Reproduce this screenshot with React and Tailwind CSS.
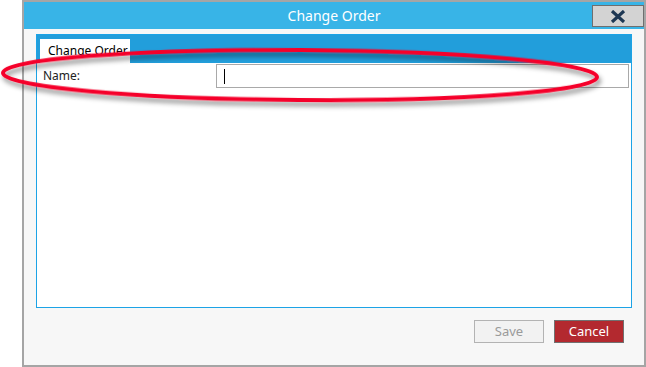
export default function App() {
  return (
    <div className="relative w-[646px] h-[367px] bg-white overflow-hidden" style={{ fontFamily: '"Segoe UI", "Noto Sans", "Liberation Sans", sans-serif' }}>
      <div className="ml-[22px] w-[624px] h-[367px] border-2 border-[#a5a5a5] bg-[#f7f7f7] flex flex-col">
        {/* title bar */}
        <div className="relative h-[27px] bg-[#38b4e7] flex items-center justify-center shrink-0">
          <span className="text-white text-[14px]">Change Order</span>
          <button className="absolute right-[0px] top-[3px] w-[52px] h-[22px] bg-[#d3d3d3] border border-[#6f6f6f] flex items-center justify-center">
            <svg width="16" height="13" viewBox="0 0 16 13">
              <path d="M2 1 L14 12 M14 1 L2 12" stroke="#1d3753" strokeWidth="3.2" />
            </svg>
          </button>
        </div>
        {/* body */}
        <div className="flex-1 flex flex-col px-[12px] pt-[5px]">
          <div className="h-[274px] border border-[#1ca3e6] bg-white flex flex-col">
            <div className="h-[28px] bg-[#229edb] flex items-end pl-[3px]">
              <div className="w-[90px] h-[24px] bg-white flex items-center pl-[8px] text-[12px] text-black">Change Order</div>
            </div>
            <div className="flex items-center pl-[6px] pr-[2px] pt-[1px]">
              <span className="w-[173px] text-[12px] text-[#222]">Name:</span>
              <div className="flex-1 h-[24px] border border-[#a9a9a9] bg-white flex items-center pl-[7px]">
                <div className="w-px h-[15px] bg-black" />
              </div>
            </div>
          </div>
          <div className="flex justify-end gap-[10px] pt-[12px] pr-[8px]">
            <button className="w-[70px] h-[23px] bg-[#f2f2f2] border border-[#b3b3b3] text-[13px] text-[#9a9a9a]">Save</button>
            <button className="w-[70px] h-[23px] bg-[#b3292f] border border-[#717171] text-[13px] text-white">Cancel</button>
          </div>
        </div>
      </div>
      <svg className="absolute left-0 top-0 pointer-events-none" width="646" height="367">
        <defs>
          <filter id="sh" x="-10%" y="-50%" width="120%" height="200%">
            <feDropShadow dx="2" dy="4" stdDeviation="2.5" floodColor="#000" floodOpacity="0.45" />
          </filter>
        </defs>
        <ellipse cx="300" cy="75" rx="297" ry="25" fill="none" stroke="#f5022c" strokeWidth="4" filter="url(#sh)" transform="rotate(0.4 300 75)" />
      </svg>
    </div>
  )
}
